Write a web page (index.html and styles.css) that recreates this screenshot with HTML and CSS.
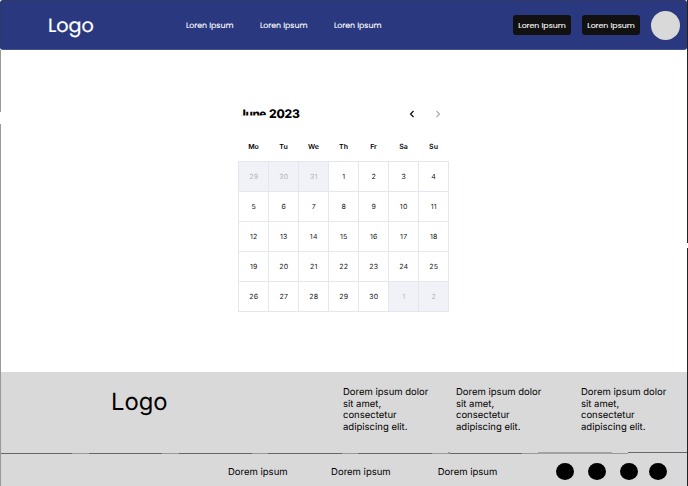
FILE: index.html
```html
<!DOCTYPE html>
<html lang="en">
<head>
<meta charset="utf-8">
<title>Calendar</title>
<link rel="stylesheet" href="styles.css">
</head>
<body>
<div class="page">
  <header class="header">
    <div class="brand">Logo</div>
    <nav class="nav"><a>Loren Ipsum</a><a>Loren Ipsum</a><a>Loren Ipsum</a></nav>
    <div class="actions"><button>Loren Ipsum</button><button>Loren Ipsum</button><span class="avatar"></span></div>
  </header>
  <main class="main">
    <section class="calendar">
      <div class="cal-head">
        <h1><span class="month">June</span><span class="year">2023</span></h1>
        <svg class="arrow" viewBox="0 0 6 8"><path d="M4.5 1 1.5 4l3 3"/></svg>
        <svg class="arrow muted" viewBox="0 0 6 8"><path d="M1.5 1l3 3-3 3"/></svg>
      </div>
      <div class="weekdays"><span>Mo</span><span>Tu</span><span>We</span><span>Th</span><span>Fr</span><span>Sa</span><span>Su</span></div>
      <div class="days">
        <span class="out">29</span><span class="out">30</span><span class="out">31</span><span>1</span><span>2</span><span>3</span><span>4</span>
        <span>5</span><span>6</span><span>7</span><span>8</span><span>9</span><span>10</span><span>11</span>
        <span>12</span><span>13</span><span>14</span><span>15</span><span>16</span><span>17</span><span>18</span>
        <span>19</span><span>20</span><span>21</span><span>22</span><span>23</span><span>24</span><span>25</span>
        <span>26</span><span>27</span><span>28</span><span>29</span><span>30</span><span class="out">1</span><span class="out">2</span>
      </div>
    </section>
  </main>
  <footer class="footer">
    <div class="footer-top">
      <div class="footer-logo">Logo</div>
      <p>Dorem ipsum dolor sit amet, consectetur adipiscing elit.</p>
      <p>Dorem ipsum dolor sit amet, consectetur adipiscing elit.</p>
      <p>Dorem ipsum dolor sit amet, consectetur adipiscing elit.</p>
    </div>
    <svg class="rule" width="688" height="2" viewBox="0 0 688 2" shape-rendering="crispEdges">
      <path class="faint" d="M0 1h448v1H0zM522 1h16v1h-16zM612 1h16v1h-16zM448 0h2v2h-2z"/>
      <path class="mid" d="M538 0h74v2h-74z"/>
      <path class="dark" d="M0 1h72v1H0zM89 1h73v1H89zM179 1h73v1h-73zM268 1h74v1h-74zM358 1h74v1h-74zM450 1h72v1h-72zM628 0h60v1h-60z"/>
    </svg>
    <div class="footer-bottom">
      <a>Dorem ipsum</a><a>Dorem ipsum</a><a>Dorem ipsum</a>
      <div class="social"><i></i><i></i><i></i><i></i></div>
    </div>
  </footer>
  <div class="edge left"></div>
  <div class="edge right"></div>
</div>
</body>
</html>
```
FILE: styles.css
```css
* { box-sizing: border-box; }
body { margin: 0; font-family: Inter, "Liberation Sans", sans-serif; color: #000; background: #fff; text-rendering: geometricPrecision; }
.page { position: relative; width: 688px; height: 486px; overflow: hidden; display: flex; flex-direction: column; }

.header { height: 50px; width: 687px; padding-top: 1px; background: #2a397f; border: 1px solid #303866; border-bottom-color: #46548f; border-radius: 3px; display: flex; align-items: center; color: #fff; font-family: Poppins, Inter, sans-serif; }
.brand { width: 138px; margin-left: 47px; font-size: 19.2px; line-height: 24px; -webkit-text-stroke: 0.2px #fff; }
.nav { display: flex; gap: 26px; }
.nav a { width: 48px; font-size: 7.8px; line-height: 12px; white-space: nowrap; -webkit-text-stroke: 0.1px #fff; }
.actions { display: flex; align-items: center; margin: -1px 6px 0 auto; }
.actions button { width: 58px; height: 20px; margin-right: 11px; padding: 1px 0 0; border: 0; border-radius: 3px; background: #111; color: #fff; font: 400 7.8px/19px Poppins, Inter, sans-serif; white-space: nowrap; -webkit-text-stroke: 0.1px #fff; }
.avatar { width: 29px; height: 29px; border-radius: 50%; background: #d9d9d9; }

.main { height: 322px; display: flex; justify-content: center; padding-top: 54px; }
.calendar { width: 212px; }
.cal-head { height: 20px; display: flex; align-items: center; padding-left: 3px; }
h1 { display: flex; margin: 0 auto 0 0; font-size: 12px; line-height: 16px; font-weight: 800; white-space: nowrap; }
.month { width: 30px; margin-left: -2px; font-size: 11.6px; letter-spacing: -0.4px; clip-path: inset(3px 0 6.5px 2px); }
.year { letter-spacing: -0.2px; }
.arrow { width: 6px; height: 8px; margin-right: 20px; fill: none; stroke: #000; stroke-width: 1.1; }
.arrow.muted { margin-right: 9px; stroke: #aaa; }
.weekdays { display: grid; grid-template-columns: repeat(7, 30px); height: 37px; padding: 17px 0 0 0.5px; text-align: center; font-size: 7px; line-height: 11px; font-weight: 600; }
.days { display: grid; grid-template: repeat(5, 30px) / repeat(7, 30px); width: 211px; border-left: 1px solid #e6e6ee; border-top: 1px solid #e6e6ee; }
.days span { padding-left: 0.5px; border-right: 1px solid #e6e6ee; border-bottom: 1px solid #e6e6ee; text-align: center; font-size: 7px; line-height: 29px; letter-spacing: 0.25px; color: #222; }
.days .out { background: #f1f2f7; color: #b4b5b9; }

.footer { height: 114px; background: #d9d9d9; }
.footer-top { height: 80px; display: flex; padding: 15px 0 0 111px; }
.footer-logo { width: 232px; font-size: 23.8px; line-height: 29px; }
.footer p { margin: 0; width: 90px; font-size: 9.5px; line-height: 11.5px; }
.footer p + p { margin-left: 23px; }
.footer p:last-child { margin-left: 35px; }
.rule { display: block; }
.rule .dark { fill: #666; }
.rule .mid { fill: #a2a2a2; }
.rule .faint { fill: #999; }
.footer-bottom { height: 32px; display: flex; align-items: center; padding: 6px 22px 0 228px; font-size: 9.5px; line-height: 12px; }
.footer-bottom a { width: 60px; margin-right: 43.5px; white-space: nowrap; }
.footer-bottom a + a { margin-right: 47px; }
.footer-bottom .social { display: flex; margin: -3px 0 0 0; }
.social i { flex: none; width: 18px; height: 17px; border-radius: 50%; background: #000; margin-left: 14px; }
.social i:first-child { margin-left: 12px; }
.social i:last-child { margin-left: 11px; }

.edge { position: absolute; width: 1px; top: 0; height: 486px; }
.edge.left { left: 0; background: linear-gradient(#999 112px, #fff 112px 124px, #999 124px); clip-path: inset(50px 0 0 0); }
.edge.right { right: 0; background: linear-gradient(#20242a 243px, #fff 243px 248px, #20242a 248px); }
```
